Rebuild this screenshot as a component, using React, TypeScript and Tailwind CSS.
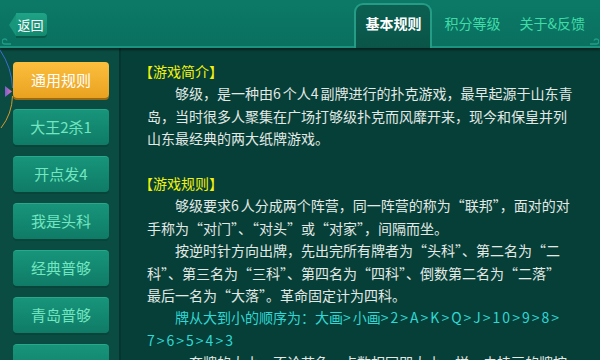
import React from "react";

const FONT = '"Noto Sans CJK SC", "Noto Sans", sans-serif';

function wrapAscii(s: string) {
  return s.split(/([0-9A-Za-z>&]+)/).map((p, i) =>
    /^[0-9A-Za-z>&]+$/.test(p) ? (
      <span key={i} className="tracking-[2px]">
        {p}
      </span>
    ) : (
      <React.Fragment key={i}>{p}</React.Fragment>
    )
  );
}

type Line = { t: string; c?: "title" | "cyan" | "body"; indent?: boolean };

const lines: Line[] = [
  { t: "【游戏简介】", c: "title" },
  { t: "够级，是一种由6个人4副牌进行的扑克游戏，最早起源于山东青", indent: true },
  { t: "岛，当时很多人聚集在广场打够级扑克而风靡开来，现今和保皇并列" },
  { t: "山东最经典的两大纸牌游戏。" },
  { t: "" },
  { t: "【游戏规则】", c: "title" },
  { t: "够级要求6人分成两个阵营，同一阵营的称为“联邦”，面对的对", indent: true },
  { t: "手称为“对门”、“对头”或“对家”，间隔而坐。" },
  { t: "按逆时针方向出牌，先出完所有牌者为“头科”、第二名为“二", indent: true },
  { t: "科”、第三名为“三科”、第四名为“四科”、倒数第二名为“二落”" },
  { t: "最后一名为“大落”。革命固定计为四科。" },
  { t: "牌从大到小的顺序为：大画>小画>2>A>K>Q>J>10>9>8>", c: "cyan", indent: true },
  { t: "7>6>5>4>3", c: "cyan" },
  { t: "一套牌的大小，不论花色，点数相同即大小一样，未挂画的牌按", indent: true },
];

const menu = ["通用规则", "大王2杀1", "开点发4", "我是头科", "经典普够", "青岛普够", ""];

export default function App() {
  return (
    <div
      lang="zh-CN"
      className="w-[600px] h-[360px] overflow-hidden flex flex-col bg-[#063f37] relative"
      style={{ fontFamily: FONT }}
    >
      {/* Header */}
      <div className="h-[48px] shrink-0 relative bg-gradient-to-b from-[#0c7967] to-[#0a705f] border-b-[2px] border-[#1a937f] flex items-end shadow-[0_2px_2px_rgba(0,0,0,0.45)] z-10">
        {/* back button */}
        <div className="absolute left-[9px] top-[13px] flex items-center h-[23px]">
          <div className="w-0 h-0 border-y-[11.5px] border-y-transparent border-r-[7px] border-r-[#17967c]" />
          <div className="h-[23px] w-[31px] rounded-r-[4px] bg-gradient-to-b from-[#1fa386] to-[#128a70] shadow-[0_2px_0_#0a5a4a] flex items-center justify-center text-white text-[13px] leading-none pr-[2px]">
            返回
          </div>
        </div>
        {/* left curl */}
        <svg className="absolute left-[2px] bottom-[1px]" width="10" height="8" viewBox="0 0 10 8">
          <path d="M9 7 H3 A2.5 2.5 0 1 1 5 3.5" fill="none" stroke="#1f9e88" strokeWidth="1.3" />
        </svg>
        {/* right curl */}
        <svg className="absolute right-[1px] bottom-[1px]" width="10" height="8" viewBox="0 0 10 8">
          <path d="M1 7 H7 A2.5 2.5 0 1 0 5 3.5" fill="none" stroke="#1f9e88" strokeWidth="1.3" />
        </svg>
        <div className="flex-1" />
        <div className="flex items-end mb-[-2px]">
          <div className="w-[78px] h-[45px] rounded-t-[9px] border-[2px] border-b-0 border-[#249c86] bg-gradient-to-b from-[#0b6052] to-[#0a5548] flex justify-center pt-[8px]">
            <span className="text-white font-bold text-[14px] leading-[20px]">基本规则</span>
          </div>
          <div className="h-[45px] pt-[10px] ml-[12px] text-[#3fdca8] text-[14px] leading-[20px]">积分等级</div>
          <div className="h-[45px] pt-[10px] ml-[19px] mr-[15px] text-[#3fdca8] text-[14px] leading-[20px]">
            关于&amp;反馈
          </div>
        </div>
      </div>

      {/* Body */}
      <div className="flex-1 flex min-h-0">
        {/* sidebar */}
        <div className="w-[121px] shrink-0 bg-[#0a4c42] border-r-[2px] border-[#06352f] relative pt-[14px] pl-[13px] flex flex-col gap-[11px]">
          <svg className="absolute left-0 top-0" width="20" height="90" viewBox="0 0 20 90">
            <defs>
              <linearGradient id="tri" x1="0" y1="0" x2="1" y2="0">
                <stop offset="0" stopColor="#7b5bd6" />
                <stop offset="1" stopColor="#e07ab0" />
              </linearGradient>
            </defs>
            <path d="M0 2 Q12 20 12.5 40" fill="none" stroke="#3b6fd0" strokeWidth="1" />
            <path d="M12.5 48 Q12 66 1 80" fill="none" stroke="#d69a2a" strokeWidth="1" />
            <polygon points="5,38 12,43.5 5,49" fill="url(#tri)" />
          </svg>
          {menu.map((m, i) =>
            i === 0 ? (
              <div
                key={i}
                className="w-[96px] h-[36px] shrink-0 rounded-[4px] bg-gradient-to-b from-[#fcbf3d] to-[#e9a21f] shadow-[0_2px_0_#9a6a12] flex items-center justify-center text-white text-[15px]"
              >
                {m}
              </div>
            ) : (
              <div
                key={i}
                className="w-[96px] h-[36px] shrink-0 rounded-[4px] bg-gradient-to-b from-[#17957b] to-[#0f7b66] border-t border-[#2aa88e] shadow-[0_2px_0_#07443a] flex items-center justify-center text-[#72e6c0] text-[15px]"
              >
                {m}
              </div>
            )
          )}
        </div>
        {/* content */}
        <div className="flex-1 bg-[#063f37] pl-[26px] pt-[12px] overflow-hidden">
          {lines.map((l, i) => (
            <div
              key={i}
              className={
                "text-[14px] leading-[22.4px] h-[22.4px] whitespace-nowrap " +
                (l.c === "title"
                  ? "text-[#f2f20c] ml-[-8px]"
                  : l.c === "cyan"
                  ? "text-[#2fd8d6]"
                  : "text-[#e2e9e6]") +
                (l.indent ? " pl-[28px]" : "")
              }
            >
              {wrapAscii(l.t)}
            </div>
          ))}
        </div>
      </div>
    </div>
  );
}
